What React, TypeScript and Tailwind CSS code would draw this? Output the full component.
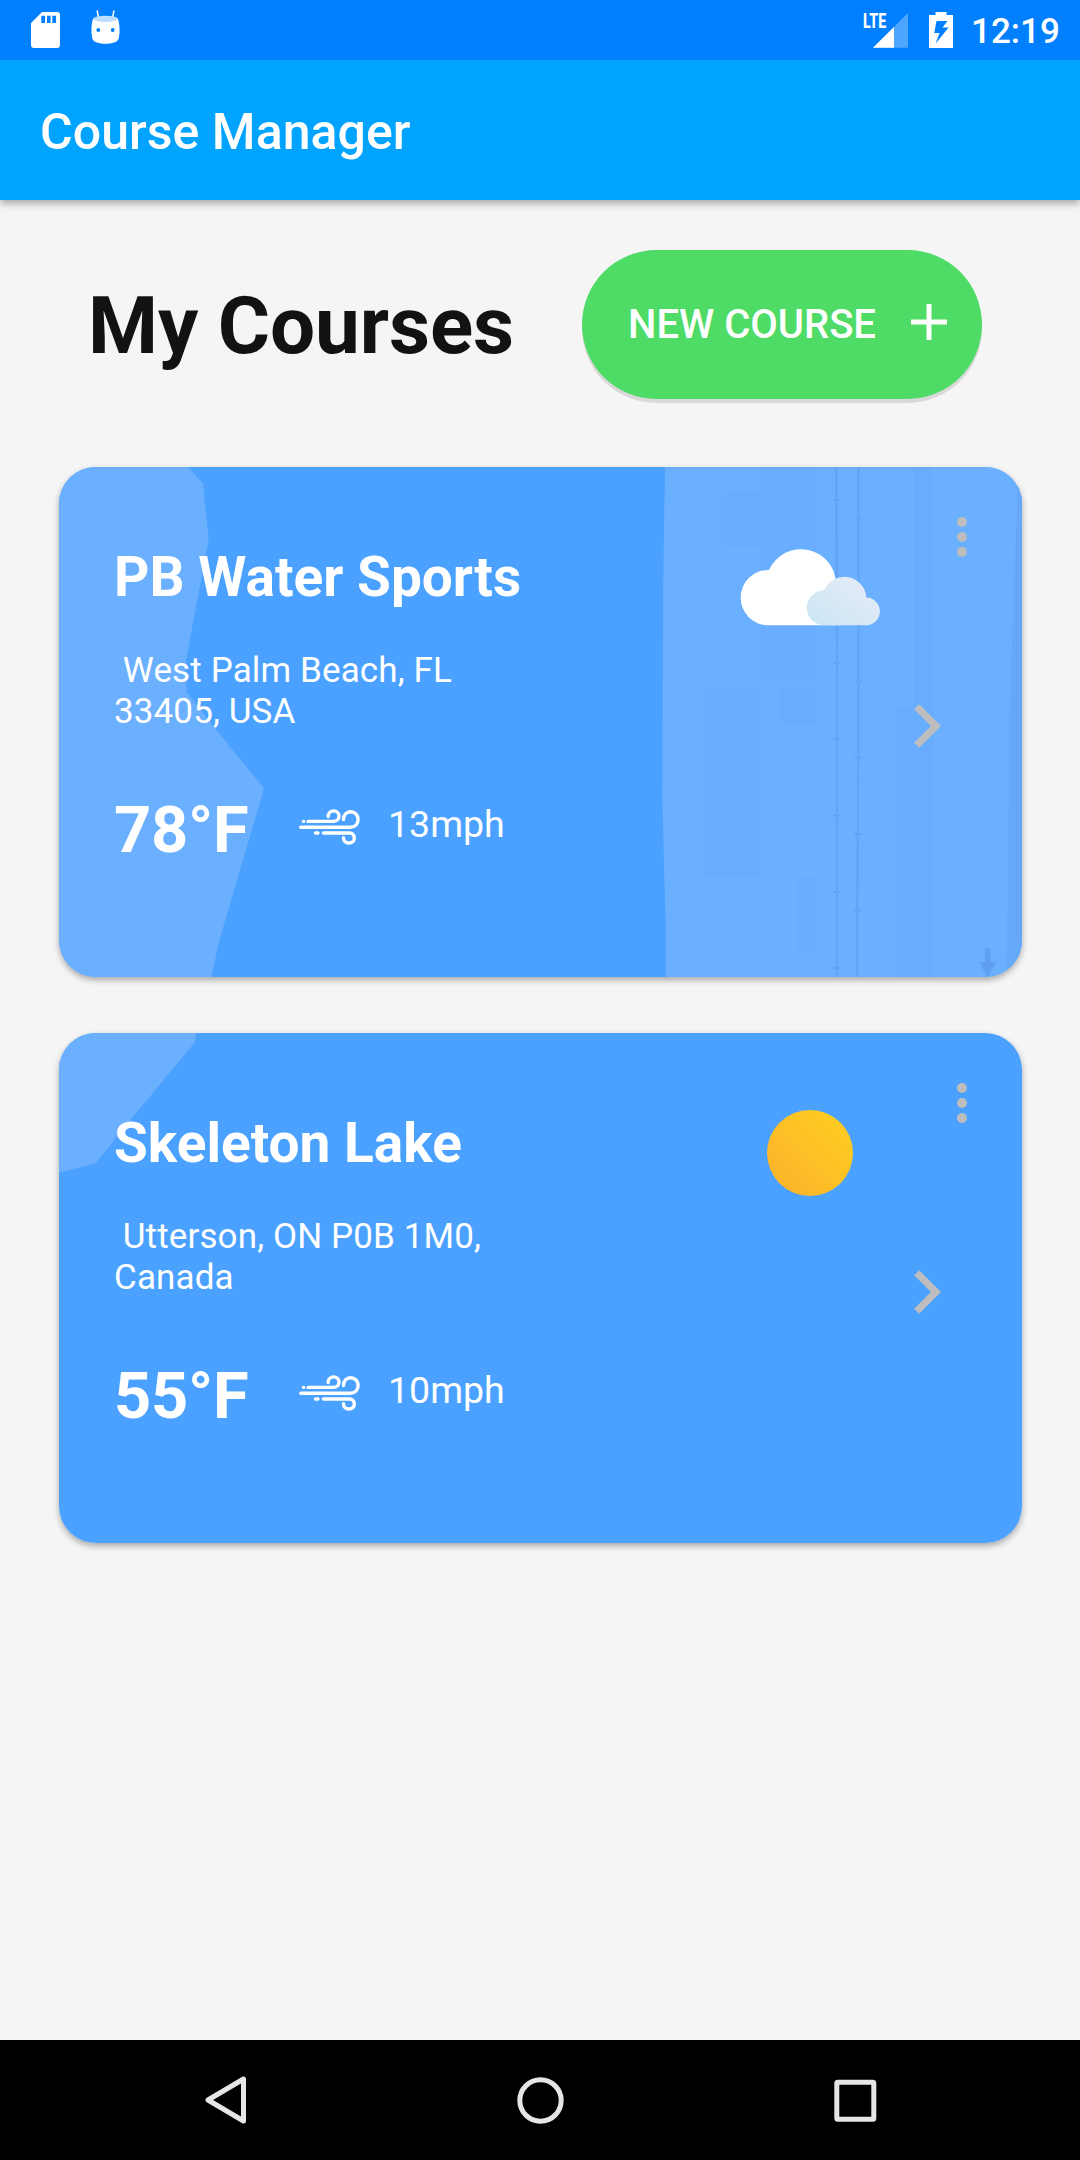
import type { ReactNode } from "react";

function SdCardIcon() {
  return (
    <svg className="h-9 w-[29px]" viewBox="0 0 29 36">
      <path fill="#fff" fillRule="evenodd" d="M11 0H26a3 3 0 0 1 3 3V33a3 3 0 0 1-3 3H3a3 3 0 0 1-3-3V11ZM10.3 3.8V11h3.8V3.8ZM16 3.8V11h3.6V3.8ZM21.3 3.8V11h3.8V3.8Z" />
    </svg>
  );
}

function AndroidHeadIcon() {
  return (
    <svg className="h-[35px] w-[29px]" viewBox="0 0 29 35">
      <path d="M6.2 1 7.6 8M22.9 1 21.5 8" stroke="#fff" strokeWidth="1.5" strokeLinecap="round" />
      <path fill="#fff" d="M2 9C4 5.500 25 5.500 27 9C29 15 29 24 27.500 29C26 35.300 3 35.300 1.500 29C0 24 0 15 2 9Z" />
      <ellipse cx="14.500" cy="8.800" rx="12" ry="3.100" fill="#b9dcff" />
      <circle cx="7.300" cy="20" r="1.900" fill="#0080ff" />
      <circle cx="21.700" cy="20" r="1.900" fill="#0080ff" />
    </svg>
  );
}

function SignalIcon() {
  return (
    <div className="relative h-9 w-[45px]">
      <svg className="h-9 w-[45px]" viewBox="0 0 45 36">
        <path fill="#4da6ff" d="M44 1V35.800H9Z" />
        <path fill="#fff" d="M30 15V35.800H9Z" />
      </svg>
      <span className="absolute -top-[4px] -left-px origin-left scale-x-[0.68] text-[21px] leading-[26px] font-extrabold">LTE</span>
    </div>
  );
}

function BatteryIcon() {
  return (
    <svg className="h-9 w-6" viewBox="0 0 24 36">
      <path fill="#fff" fillRule="evenodd" d="M6.500 0H17.500V3H24V36H0V3H6.500ZM7.500 9 5.300 21H10.500L6.500 31.700 19.500 15.500H13.500L18.500 9Z" />
    </svg>
  );
}

function WindIcon() {
  return (
    <svg className="h-9 w-[61px]" viewBox="0 0 61 36" fill="none" stroke="#fff" strokeWidth="3.400" strokeLinecap="round">
      <path d="M9 12.400H34C38 12.400 40 10 40 7.200C40 4 37.700 1.900 34.700 1.900C31.500 1.900 29.200 4 29.200 7.500" />
      <path d="M1.800 18.300H51C56 18.300 59.100 15 59.100 10.500C59.100 6 56 2.800 51.700 2.800C47.500 2.800 44.500 6 44.500 10.500" />
      <path d="M24.500 24H50.500C53.800 24 55.300 26.500 55.300 29C55.300 32 53 34 49.800 34C46.700 34 44.500 32 44.500 28.700" />
      <path d="M4.500 12.400H4.600M16.500 24H19" />
    </svg>
  );
}

function CloudIcon() {
  return (
    <svg className="h-[78px] w-[142px]" viewBox="0 0 142 78">
      <defs>
        <linearGradient id="cloud" x1="0" y1="1" x2="1" y2="0">
          <stop offset="0.100" stopColor="#cce6f5" />
          <stop offset="0.700" stopColor="#e0eaf6" />
        </linearGradient>
      </defs>
      <path fill="#fff" d="M27.600 77.300A27.500 27.500 0 0 1 29 22A35 35 0 0 1 96 36L100 77.300Z" />
      <path fill="url(#cloud)" d="M84.500 77.300A17.400 17.400 0 0 1 84 42.300A22 22 0 0 1 126.300 49.400A14 14 0 0 1 127.500 77.300Z" />
    </svg>
  );
}

function SunIcon() {
  return (
    <div className="mr-[29px] size-[86px] rounded-full bg-linear-to-tr from-[#fbb02b] to-[#ffd01f]" />
  );
}

function ChevronIcon() {
  return (
    <svg className="h-11 w-[27px]" viewBox="0 0 27 44">
      <path d="M2.700 2.700 22 22 2.700 41.300" fill="none" stroke="#bdbdbd" strokeWidth="7.200" />
    </svg>
  );
}

const DARK = "#5f9ff2";

function BeachMap() {
  return (
    <svg className="absolute inset-0 size-full" viewBox="0 0 963 510">
      <path fill="#6bafff" d="M0 0H129L144 16.500L149.700 73L127 193L127.700 225L158.300 264L205 321.600L159.300 477L152.700 510H0Z" />
      <path fill="#6bafff" d="M606 0H963V510H607L607 472L605 396L603.300 330L604.300 110Z" />
      <path fill="#66abfc" opacity="0.220" d="M663 25H701V80H663ZM643 220H701V410H643ZM720 220H757V257H720ZM738 410H757V486H738ZM836 240H855V510H836ZM701 0H758V215H701Z" />
      <path fill="#66abfc" opacity="0.600" d="M855 0H874V510H855Z" />
      <path fill="#64a8f7" d="M958.500 20H963V510H947.700L949 400L951 234.500Z" />
      <g fill="none" stroke={DARK} strokeWidth="1.800" opacity="0.850">
        <path d="M777.300 0L778 200V510M799.500 0V260L798.300 430V510" />
        <path d="M774 33H781M774.500 195.600H781.500M774.500 272H781.500M774.500 348.500H781.500M774.500 425H781.500M774.500 501H781.500M796 51.300H803M796 214.500H803M795.500 290.600H802.500M795.500 367H802.500M795 443.500H802" />
      </g>
      <path fill={DARK} d="M926 481H931.300V495H937L929.500 510H928L920.300 495H926Z" />
    </svg>
  );
}

function LakeMap() {
  return (
    <svg className="absolute inset-0 size-full" viewBox="0 0 963 510">
      <path fill="#6bafff" d="M0 0H137L135.700 9.600L71 87.500L37 130L0 140Z" />
    </svg>
  );
}

type CardProps = {
  name: string;
  address: string[];
  temp: string;
  wind: string;
  map: ReactNode;
  weather: ReactNode;
  weatherPad: string;
};

function CourseCard({ name, address, temp, wind, map, weather, weatherPad }: CardProps) {
  return (
    <article className="relative h-[510px] overflow-hidden rounded-[37px] bg-[#4aa1ff] text-white">
      {map}
      <div className="relative flex h-full pl-[55px]">
        <div className="flex w-[600px] flex-col pt-[78px]">
          <h2 className="text-[55px] leading-[64px] font-bold">{name}</h2>
          <p className="mt-[41px] text-[35px] leading-[41px] tracking-[0.12px] whitespace-pre">
            {address.map((line) => (
              <span key={line} className="block">
                {line}
              </span>
            ))}
          </p>
          <div className="mt-[60px] flex items-start">
            <span className="w-[185px] text-[65px] leading-[76px] font-bold tracking-[-0.3px]">{temp}</span>
            <span className="pt-[17px]">
              <WindIcon />
            </span>
            <span className="pt-2.5 pl-7 text-[37.500px] leading-[44px]">{wind}</span>
          </div>
        </div>
        <div className={"flex flex-1 flex-col items-end " + weatherPad}>
          <div className="flex h-[160px] w-full items-start justify-end pr-[27px]">{weather}</div>
        </div>
        <div className="flex w-[113px] flex-col pt-[50px]">
          <div className="ml-[48px] flex flex-col gap-[5px]">
            <i className="size-2.5 rounded-full bg-[#bdbdbd]" />
            <i className="size-2.5 rounded-full bg-[#bdbdbd]" />
            <i className="size-2.5 rounded-full bg-[#bdbdbd]" />
          </div>
          <div className="mt-[147px] pl-[5px]">
            <ChevronIcon />
          </div>
        </div>
      </div>
    </article>
  );
}

export default function App() {
  return (
    <div className="flex h-[2160px] w-[1080px] flex-col bg-[#f5f5f5] font-['Roboto',sans-serif]">
      <div className="z-20 flex h-15 items-start bg-[#0080ff] pl-[31px] text-white">
        <div className="flex flex-1 items-start">
          <div className="pt-3">
            <SdCardIcon />
          </div>
          <div className="pt-2.5 pl-[31px]">
            <AndroidHeadIcon />
          </div>
        </div>
        <div className="flex w-[216px] items-start pt-3">
          <SignalIcon />
          <div className="pl-5">
            <BatteryIcon />
          </div>
          <span className="-mt-[7px] pl-[18px] text-[35px] leading-[54px] font-medium">12:19</span>
        </div>
      </div>
      <header className="z-10 flex h-[140px] items-center bg-[#00a4ff] pl-10 text-white shadow-[0_3px_8px_rgba(0,0,0,0.35)]">
        <h1 className="pt-1 text-[50px] leading-[60px] font-medium tracking-[0.06px]">Course Manager</h1>
      </header>
      <main className="flex flex-1 flex-col">
        <div className="flex h-[200px] items-start pt-[50px] pl-[88px]">
          <h2 className="w-[494px] pt-[29px] text-[80px] leading-[94px] font-bold tracking-[-0.12px] text-[#121212]">My Courses</h2>
          <button className="flex h-[149px] w-[400px] items-center rounded-[75px] bg-[#4edb66] pl-[46px] text-white shadow-[0_4px_0_#d9d9d9]">
            <span className="w-[283px] text-left text-[40px] leading-[48px] font-medium">NEW COURSE</span>
            <svg className="-mt-[5px] size-[36px]" viewBox="0 0 36 36">
              <path d="M18 0V36M0 18H36" stroke="#fff" strokeWidth="5" />
            </svg>
          </button>
        </div>
        <div className="flex flex-col gap-14 pt-[67px] pr-[58px] pl-[59px]">
          <div className="rounded-[37px] shadow-[0_3px_6px_rgba(0,0,0,0.32)]">
            <CourseCard
              name="PB Water Sports"
              address={[" West Palm Beach, FL", "33405, USA"]}
              temp="78°F"
              wind="13mph"
              map={<BeachMap />}
              weather={<CloudIcon />}
              weatherPad="pt-[81px]"
            />
          </div>
          <div className="rounded-[37px] shadow-[0_3px_6px_rgba(0,0,0,0.32)]">
            <CourseCard
              name="Skeleton Lake"
              address={[" Utterson, ON P0B 1M0,", "Canada"]}
              temp="55°F"
              wind="10mph"
              map={<LakeMap />}
              weather={<SunIcon />}
              weatherPad="pt-[77px]"
            />
          </div>
        </div>
      </main>
      <nav className="flex h-30 items-center justify-between bg-black pr-[203px] pl-[205px]">
        <svg className="h-12 w-[42px]" viewBox="0 0 42 48">
          <path d="M38.500 3V45L3 24Z" fill="none" stroke="#e6e6e6" strokeWidth="5" strokeLinejoin="round" />
        </svg>
        <svg className="size-12" viewBox="0 0 48 48">
          <circle cx="23.500" cy="24.500" r="20.700" fill="none" stroke="#e6e6e6" strokeWidth="5" />
        </svg>
        <svg className="size-[43px]" viewBox="0 0 43 43">
          <rect x="2.800" y="3.300" width="37" height="37" rx="1" fill="none" stroke="#e6e6e6" strokeWidth="5" />
        </svg>
      </nav>
    </div>
  );
}
